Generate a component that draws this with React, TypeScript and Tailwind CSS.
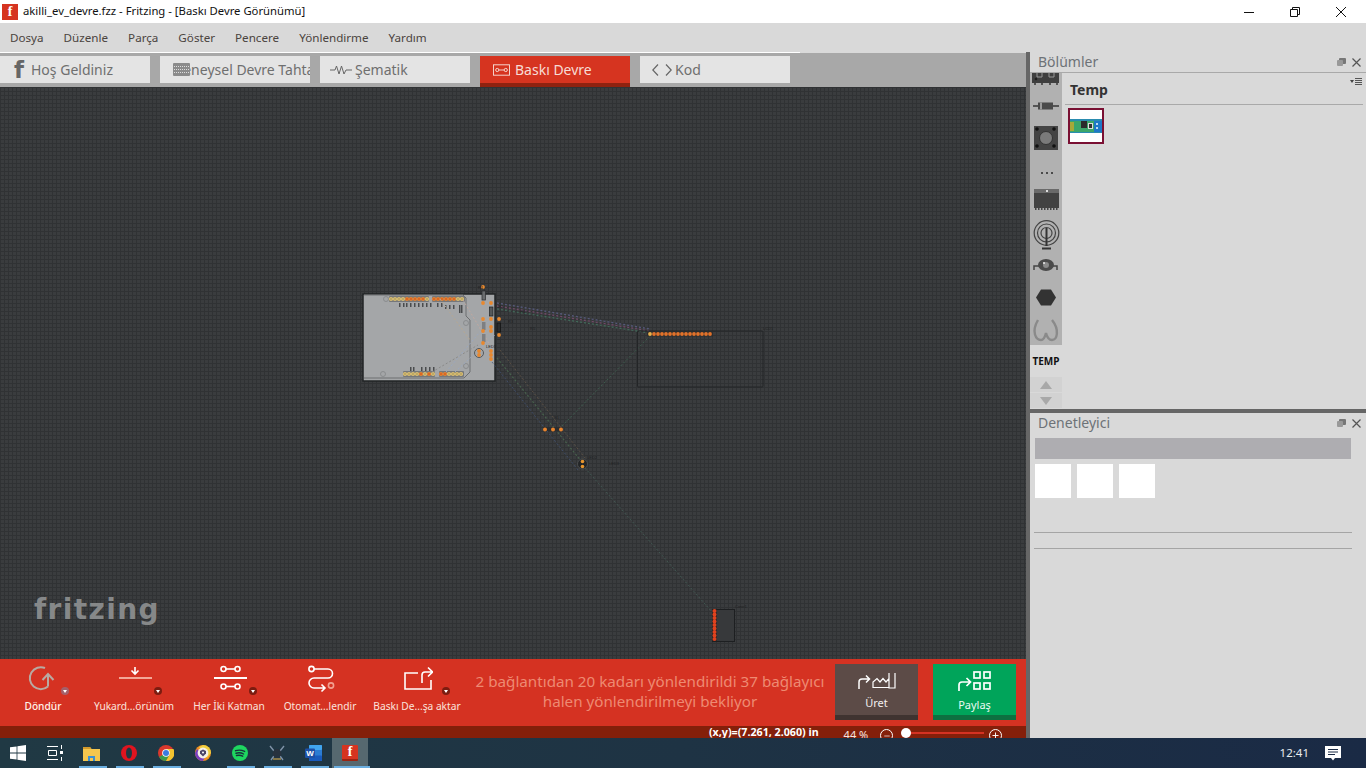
import { Minus, Plus } from 'lucide-react'

const menus = ['Dosya', 'Düzenle', 'Parça', 'Göster', 'Pencere', 'Yönlendirme', 'Yardım']

const range = (from: number, count: number, step: number) =>
  Array.from({ length: count }, (_, i) => from + i * step)

// tiny ratsnest wires, in page coordinates
const wires = [
  { d: 'M497 306 L650 331', c: '#7a4f70', w: 1.4, o: 0.85 },
  { d: 'M497 309 L650 333', c: '#44705e', w: 1.4, o: 0.85 },
  { d: 'M497 303 L650 329', c: '#5c5f85', w: 1.4, o: 0.85 },
  { d: 'M650 336 L561 427', c: '#3f6653', w: 1, o: 0.8 },
  { d: 'M497 358 L582 462', c: '#4b6a50', w: 1.2, o: 0.8 },
  { d: 'M492 362 L578 470', c: '#41547a', w: 1, o: 0.7 },
  { d: 'M500 350 L585 458', c: '#6a5a48', w: 1, o: 0.7 },
  { d: 'M585 468 L712 612', c: '#45625a', w: 1, o: 0.7 },
  { d: 'M440 299 L470 340', c: '#b8a890', w: 1, o: 1 },
  { d: 'M463 300 L490 345', c: '#c0a8a0', w: 1, o: 1 },
  { d: 'M432 372 L478 345', c: '#8a8a8a', w: 1, o: 1 },
  { d: 'M446 372 L490 320', c: '#9aa8c0', w: 1, o: 1 },
  { d: 'M455 372 L495 335', c: '#9aa8c0', w: 1, o: 1 },
]

function Pad({ x, y, hot }: { x: number; y: number; hot?: boolean }) {
  return (
    <g>
      <circle cx={x} cy={y} r={2.1} fill={hot ? '#e8822e' : '#dcc070'} />
      <circle cx={x} cy={y} r={0.8} fill={hot ? '#c8481c' : '#9c8c58'} />
    </g>
  )
}

function CircuitDrawing() {
  return (
    <svg className="block h-[572px] w-[1026px]" viewBox="0 87 1026 572" fill="none">
      {/* board */}
      <rect x="363" y="294" width="132" height="87" fill="#a4a6a8" stroke="#222426" strokeWidth="1.5" />
      <path d="M364 295 H463 L466 298 V316 L470 320 V372 L464 378 H364" stroke="#6c6e70" />
      {[[386, 299], [466, 323], [466, 366], [383, 374]].map(([x, y]) => (
        <circle key={x} cx={x} cy={y} r={2.5} stroke="#8a8c8e" />
      ))}
      <rect x="389" y="296" width="40" height="6" rx="1" fill="#75777a" />
      <rect x="432" y="296" width="33" height="6" rx="1" fill="#75777a" />
      <rect x="403" y="371" width="32" height="6" rx="1" fill="#75777a" />
      <rect x="439" y="371" width="25" height="6" rx="1" fill="#75777a" />
      {range(391, 10, 4).map((x, i) => <Pad key={x} x={x} y={299} hot={i > 3 && i < 9} />)}
      {range(434, 8, 4).map((x, i) => <Pad key={x} x={x} y={299} hot={i < 6} />)}
      {range(405, 8, 4).map((x, i) => <Pad key={x} x={x} y={374} hot={i === 4 || i === 6} />)}
      {range(441, 6, 4).map((x, i) => <Pad key={x} x={x} y={374} hot={i < 2} />)}
      {[399, 403, 406, 410, 414, 418, 422, 426, 430, 437, 441, 445, 449, 453, 459, 461].map((x, i) => (
        <rect key={i} x={x} y={i > 10 ? 305 : 303} width="1.5" height={i > 13 ? 8 : 4} fill="#4a4c4e" />
      ))}
      {[410, 413, 421, 425, 429, 433].map((x) => (
        <rect key={x} x={x} y="367" width="1.5" height="4" fill="#4a4c4e" />
      ))}

      {wires.map((w) => (
        <path key={w.d} d={w.d} stroke={w.c} strokeWidth={w.w} strokeOpacity={w.o} strokeDasharray="2 2" />
      ))}

      {/* resistors and leds next to the board */}
      <rect x="482" y="291" width="3.5" height="9" fill="#6a6c6e" stroke="#2a2c2e" strokeWidth=".7" />
      <rect x="489.5" y="307" width="3.5" height="9" fill="#55585a" stroke="#1f2123" strokeWidth=".7" />
      <rect x="497" y="323" width="3.5" height="9" fill="#2a2c2e" stroke="#111" strokeWidth=".7" />
      <rect x="482" y="322" width="3.5" height="8" fill="#7d7f82" />
      <rect x="482" y="334" width="3.5" height="8" fill="#7d7f82" />
      <rect x="489" y="324" width="5" height="10" rx="1" fill="#a4a6a8" />
      <rect x="489" y="349" width="5" height="12" rx="1" fill="#a4a6a8" />
      <circle cx="479" cy="353" r="4.5" fill="#a4a6a8" stroke="#55585a" />
      {([[483, 287], [483, 303], [491, 303], [491, 319], [499, 319], [499, 335], [483, 319], [483, 331], [483, 343], [491, 327], [491, 331], [491, 351], [491, 355], [491, 359], [479, 351], [479, 355]] as number[][]).map(([x, y]) => (
        <circle key={`${x}-${y}`} cx={x} cy={y} r={1.9} fill="#e8882e" />
      ))}

      {/* lcd */}
      <rect x="637.5" y="331" width="125.5" height="56" rx="1" stroke="#232527" strokeWidth="1" />
      <rect x="647" y="331.5" width="66" height="5" fill="#2b2d2f" />
      {range(650, 16, 4).map((x, i) => (
        <circle key={x} cx={x} cy={334} r={1.9} fill={i === 0 ? '#e8b04c' : '#e2722a'} />
      ))}

      {/* sensor */}
      <rect x="543" y="427" width="20" height="4" fill="#2b2d2f" />
      {[545, 553, 561].map((x) => <circle key={x} cx={x} cy={429.5} r={2} fill="#e8842e" />)}

      {/* led */}
      <circle cx="582.5" cy="464" r="5" fill="#232527" stroke="#4a4c4e" />
      <circle cx="582.5" cy="461.5" r="1.8" fill="#e8962e" />
      <circle cx="582.5" cy="466.5" r="1.8" fill="#e8962e" />

      {/* header */}
      <rect x="712.5" y="609.5" width="22" height="32" stroke="#1d1f21" strokeWidth="1" fill="#37393b" />
      <rect x="712" y="610" width="5" height="31" fill="#26282a" />
      {range(611, 9, 3.5).map((y) => <circle key={y} cx={714.5} cy={y} r={2} fill="#e0421e" />)}

      {/* part labels */}
      <g fill="#1f2123" fontFamily="Liberation Sans, sans-serif" fontSize="4">
        <text x="478" y="289">R1</text>
        <text x="498" y="308">R2</text>
        <text x="508" y="323">R3</text>
        <text x="520" y="313">R4</text>
        <text x="530" y="330">R5</text>
        <text x="486" y="348">LED1</text>
        <text x="763" y="330">LCD1</text>
        <text x="554" y="419">S1</text>
        <text x="587" y="459">LED2</text>
        <text x="609" y="465">LED3</text>
        <text x="735" y="608">Conn1</text>
      </g>
    </svg>
  )
}

function FritzingLogo() {
  return (
    <div className="absolute left-[34px] top-[503px] font-['DejaVu_Sans',sans-serif] text-[28px] font-bold leading-[40px] tracking-[1.4px] text-[#868889]">
      fritzing
    </div>
  )
}

function Tab({ label, icon, active, className }: { label: string; icon: React.ReactNode; active?: boolean; className: string }) {
  return (
    <div className="flex h-[31px] w-[150px] flex-col overflow-hidden">
      <div className={`relative flex h-[27px] items-center overflow-hidden whitespace-nowrap text-[14px] ${className} ${active ? 'bg-[#d63420] text-[#f6dcd6]' : 'bg-[#e4e4e4] text-[#6f6f6f]'}`}>
        {icon}
        <span>{label}</span>
      </div>
      {active && <div className="h-[4px] bg-[#8f2210]" />}
    </div>
  )
}

function ToolItem({ width, label, badge, badgeClass, icon, strong }: { width: string; label: string; badge?: string; badgeClass?: string; icon: React.ReactNode; strong?: boolean }) {
  return (
    <div className={`relative flex shrink-0 flex-col items-center pt-[5px] ${width}`}>
      <div className="flex h-[32px] items-center justify-center">{icon}</div>
      <div className={`mt-[3px] whitespace-nowrap text-[10.2px] leading-[14px] ${strong ? 'font-medium text-[#fff2ea]' : 'text-[#fbe3dd]'}`}>{label}</div>
      {badge && (
        <div className={`absolute top-[28px] flex h-[8px] w-[8px] items-center justify-center rounded-full ${badge} ${badgeClass ?? 'bg-[#7c1c10]'}`}>
          <div className="h-0 w-0 border-x-[2.5px] border-t-[3px] border-x-transparent border-t-white" />
        </div>
      )}
    </div>
  )
}

function Taskbar() {
  return (
    <div className="relative flex h-[30px] items-center bg-[linear-gradient(90deg,#203944,#1e3344_50%,#1a2a45)] text-white">
      <div className="flex w-[36px] justify-center">
        <svg width="16" height="16" viewBox="0 0 16 16" fill="#fff"><path d="M0 2.3 6.6 1.4V7.5H0ZM7.4 1.3 16 0V7.5H7.4ZM0 8.4H6.6V14.6L0 13.7ZM7.4 8.4H16V16L7.4 14.8Z" /></svg>
      </div>
      <div className="flex w-[36px] justify-center">
        <svg width="17" height="16" viewBox="0 0 17 16" fill="none" stroke="#fff"><path d="M1 1.5H12M1 14.5H12M2.5 5.5H10.5V10.5H2.5Z" /><path d="M15.5 0V4M15.5 12V16" /><rect x="14" y="6" width="3" height="3" fill="#fff" stroke="none" /></svg>
      </div>
      <div className="flex w-[38px] justify-center">
        <svg width="17" height="15" viewBox="0 0 17 15"><path d="M0 1H7L8.5 3H17V15H0Z" fill="#f4c64e" /><path d="M0 1H7L8.5 3H0Z" fill="#d39a2c" /><path d="M5 15V10H12V15H10V12H7V15Z" fill="#3b8fd2" /></svg>
      </div>
      <div className="flex w-[37px] justify-center">
        <svg width="16" height="16" viewBox="0 0 16 16"><circle cx="8" cy="8" r="8" fill="#e0141f" /><ellipse cx="8" cy="8" rx="3" ry="5.6" fill="#1f3844" /></svg>
      </div>
      <div className="flex w-[37px] justify-center">
        <svg width="16" height="16" viewBox="0 0 16 16"><circle cx="8" cy="8" r="8" fill="#d9382c" /><path d="M8 8 1 12A8 8 0 0 0 8 16L12 9Z" fill="#3c9a4a" /><path d="M8 4H15.4A8 8 0 0 1 8 16L12 9Z" fill="#f4c430" /><circle cx="8" cy="8" r="3.8" fill="#fff" /><circle cx="8" cy="8" r="3" fill="#3a7be0" /></svg>
      </div>
      <div className="flex w-[37px] justify-center">
        <svg width="16" height="16" viewBox="0 0 16 16"><circle cx="8" cy="8" r="8" fill="#f09020" /><path d="M8 0A8 8 0 0 1 16 8L12 13 4 2Z" fill="#f0d040" /><path d="M0 8A8 8 0 0 0 8 16L10 12 2 4Z" fill="#7a3fc0" /><circle cx="8" cy="8" r="5.4" fill="#f4f0e8" /><path d="M8 4.5 11 6V8.5L8 11.5 5 8.5V6Z" fill="#4a4468" /><circle cx="8" cy="7.5" r="1" fill="#fff" /></svg>
      </div>
      <div className="flex w-[37px] justify-center">
        <svg width="16" height="16" viewBox="0 0 16 16" fill="none"><circle cx="8" cy="8" r="8" fill="#1ed760" /><path d="M3.5 5.7C6.5 4.8 9.8 5 12.6 6.4M4 8.2C6.6 7.5 9.3 7.7 11.6 9M4.5 10.5C6.6 10 8.8 10.1 10.7 11.2" stroke="#18323c" strokeWidth="1.4" strokeLinecap="round" /></svg>
      </div>
      <div className="flex w-[37px] justify-center">
        <svg width="16" height="16" viewBox="0 0 16 16" fill="none"><path d="M1 1 5 6M15 1 11 6M2 15 5 11M14 15 11 11" stroke="#7f93a8" strokeWidth="1.4" /><circle cx="8" cy="8.5" r="4.4" fill="#27323e" /><path d="M4 14H12" stroke="#c9a24c" strokeWidth="1.2" /></svg>
      </div>
      <div className="flex w-[37px] justify-center">
        <svg width="17" height="16" viewBox="0 0 17 16"><rect x="4" y="0" width="13" height="16" rx="1" fill="#2b7cd3" /><rect x="4" y="0" width="13" height="5" rx="1" fill="#41a5ee" /><rect x="4" y="10.5" width="13" height="5.5" rx="1" fill="#185abd" /><rect x="0" y="3.5" width="10" height="9.5" rx="1" fill="#1d50a6" /><text x="5" y="11.2" textAnchor="middle" fontSize="8" fontWeight="700" fontFamily="Liberation Sans, sans-serif" fill="#fff">W</text></svg>
      </div>
      <div className="flex h-[30px] w-[36px] items-center justify-center bg-[#56686f]">
        <div className="flex h-[16px] w-[16px] items-center justify-center rounded-[1px] border-b-2 border-b-[#9a2413] bg-[#d63420] font-['Liberation_Serif',serif] text-[14px] font-bold leading-none text-white">f</div>
      </div>

      <div className="ml-auto mr-[25px] flex items-center gap-[16px]">
        <span className="text-[11.5px] text-[#e8ecf0]">12:41</span>
        <svg width="16" height="16" viewBox="0 0 16 16"><path d="M0 1H16V13H10L8 15.5 6 13H0Z" fill="#fff" /><path d="M3 4.5H13M3 7H13M3 9.5H10" stroke="#1a2a45" /></svg>
      </div>

      {/* running-app underlines */}
      <div className="absolute bottom-0 left-[79px] h-[2px] w-[28px] bg-[#6aaee0]" />
      <div className="absolute bottom-0 left-[116px] h-[2px] w-[28px] bg-[#6aaee0]" />
      <div className="absolute bottom-0 left-[153px] h-[2px] w-[28px] bg-[#6aaee0]" />
      <div className="absolute bottom-0 left-[227px] h-[2px] w-[28px] bg-[#6aaee0]" />
      <div className="absolute bottom-0 left-[264px] h-[2px] w-[28px] bg-[#6aaee0]" />
      <div className="absolute bottom-0 left-[301px] h-[2px] w-[28px] bg-[#6aaee0]" />
      <div className="absolute bottom-0 left-[334px] h-[2px] w-[36px] bg-[#6aaee0]" />
    </div>
  )
}

function BinIcons() {
  return (
    <svg className="block h-[273px] w-[32px]" viewBox="1030 73 32 273" fill="none">
      {/* ic clipped at the top */}
      <rect x="1032" y="70" width="27" height="13" fill="#3f3f3f" />
      <path d="M1037 73V77H1042V73M1049 73V77H1054V73" stroke="#999" />
      <circle cx="1036" cy="79" r="1.3" fill="#1f1f1f" />
      {[1034, 1041, 1049, 1056].map((x) => <rect key={x} x={x} y="83" width="2" height="2" fill="#555" />)}
      {/* diode */}
      <path d="M1033 106H1059" stroke="#555" strokeWidth="2" />
      <rect x="1038" y="102.5" width="15" height="7" fill="#4a4a4a" />
      <rect x="1040" y="102.5" width="2" height="7" fill="#9a9a9a" />
      {/* push button */}
      <rect x="1034" y="126" width="24" height="24" fill="#444" />
      <circle cx="1046" cy="138" r="6.5" fill="#7a7a7a" stroke="#333" />
      {[[1037, 129], [1054, 129], [1037, 146], [1054, 146]].map(([x, y]) => <circle key={`${x}${y}`} cx={x} cy={y} r="1.8" fill="#111" />)}
      {/* dots */}
      {[1041, 1046, 1051].map((x) => <rect key={x} x={x} y="172" width="2" height="2" fill="#4a4a4a" />)}
      {/* chip */}
      <rect x="1034" y="189" width="25" height="19" fill="#424242" />
      <rect x="1034" y="189" width="25" height="4" fill="#6a6a6a" />
      <rect x="1046" y="190" width="2" height="2" fill="#ddd" />
      {range(1035, 8, 3).map((x) => <rect key={x} x={x} y="208" width="1.5" height="2" fill="#444" />)}
      {/* antenna */}
      <circle cx="1046.5" cy="233" r="12.3" stroke="#444" strokeWidth="1.2" />
      <circle cx="1046.5" cy="233" r="9" stroke="#444" strokeWidth="1.2" />
      <circle cx="1046.5" cy="233" r="5.5" stroke="#444" strokeWidth="1.2" />
      <path d="M1046.5 228V246" stroke="#333" strokeWidth="2" />
      <path d="M1042 248.5H1051" stroke="#333" strokeWidth="2" />
      {/* motor */}
      <path d="M1034 270V266H1040M1053 266H1057V270" stroke="#444" strokeWidth="1.5" />
      <ellipse cx="1046" cy="265" rx="8" ry="6" fill="#4a4a4a" />
      <circle cx="1046" cy="265" r="3" fill="#8a8a8a" />
      <circle cx="1044" cy="263" r="1" fill="#eee" />
      {/* hex */}
      <path d="M1041 289.5H1051L1056 297.5 1051 305.5H1041L1036 297.5Z" fill="#333" />
      {/* wire loop */}
      <path d="M1038 320C1031 332 1036 340 1041 340 1044 340 1045 337 1046 333 1047 337 1049 340 1052 340 1057 340 1060 330 1052 320" stroke="#8a8a8a" strokeWidth="2.4" />
    </svg>
  )
}

function PanelHeader({ title }: { title: string }) {
  return (
    <div className="flex h-[20px] items-center justify-between pl-[8px] pr-[5px]">
      <span className="text-[14px] leading-[20px] text-[#6d7277]">{title}</span>
      <div className="flex items-center gap-[6px]">
        <svg width="9" height="8" viewBox="0 0 9 8"><rect x="2" y="0" width="7" height="6" rx="1" fill="#777" /><rect x="0" y="2" width="6" height="6" rx="1" fill="#999" /></svg>
        <svg width="9" height="9" viewBox="0 0 9 9" stroke="#555" strokeWidth="1.2"><path d="M.5.5 8.5 8.5M8.5.5.5 8.5" /></svg>
      </div>
    </div>
  )
}

export default function App() {
  return (
    <div className="flex h-[768px] w-[1366px] flex-col overflow-hidden bg-[#d9d9d9] font-['Noto_Sans',sans-serif]">
      {/* title bar */}
      <div className="flex h-[23px] items-center bg-white">
        <div className="ml-[2px] flex h-[16px] w-[16px] items-center justify-center bg-[#d63420] font-['Liberation_Serif',serif] text-[14px] font-bold leading-none text-white">f</div>
        <span className="ml-[5px] text-[11.3px] text-[#111]">akilli_ev_devre.fzz - Fritzing - [Baskı Devre Görünümü]</span>
        <div className="ml-auto mr-[2px] flex">
          <div className="flex w-[46px] justify-center"><svg width="10" height="10" viewBox="0 0 10 10" stroke="#111"><path d="M0 5.5H10" /></svg></div>
          <div className="flex w-[46px] justify-center"><svg width="10" height="10" viewBox="0 0 10 10" fill="none" stroke="#111"><path d="M.5 2.5H7.5V9.5H.5ZM2.5 2.5V.5H9.5V7.5H7.5" /></svg></div>
          <div className="flex w-[46px] justify-center"><svg width="10" height="10" viewBox="0 0 10 10" stroke="#111"><path d="M0 0 10 10M10 0 0 10" /></svg></div>
        </div>
      </div>

      {/* menu bar */}
      <div className="flex h-[29px] items-center gap-[20px] px-[10px] text-[11.65px] text-[#4b4440]">
        {menus.map((m) => <span key={m}>{m}</span>)}
      </div>

      <div className="flex min-h-0 flex-1">
        {/* left work area */}
        <div className="flex w-[1026px] flex-col">
          <div className="h-[1px] w-[800px] bg-white" />
          <div className="flex h-[34px] gap-[10px] bg-[#a8a8a8] pt-[3px]">
            <Tab
              className="pl-[14px]"
              label="Hoş Geldiniz"
              icon={<span className="w-[17px] font-['DejaVu_Sans',sans-serif] text-[23px] font-bold leading-[26px] text-[#666]">f</span>}
            />
            <div className="flex h-[31px] w-[150px] flex-col overflow-hidden">
              <div className="relative flex h-[27px] items-center overflow-hidden whitespace-nowrap bg-[#e4e4e4] pl-[13px] text-[14px] text-[#6f6f6f]">
                <span>Deneysel Devre Tahtası</span>
                <div className="absolute left-[13px] top-[7px] flex h-[13px] w-[17px] flex-col justify-center gap-[2px] rounded-[1px] bg-[#8b8b8b] px-[1px]">
                  <div className="h-[1px] border-t border-dotted border-[#ddd]" />
                  <div className="h-[1px] border-t border-dotted border-[#ddd]" />
                  <div className="h-[1px] border-t border-dotted border-[#ddd]" />
                </div>
              </div>
            </div>
            <Tab
              className="gap-[3px] pl-[10px]"
              label="Şematik"
              icon={<svg width="22" height="10" viewBox="0 0 22 10" fill="none" stroke="#666" strokeWidth="1"><path d="M0 5H5L6.5 1 9 9 11.5 1 14 9 16 5H22" /></svg>}
            />
            <Tab
              active
              className="gap-[5px] pl-[13px]"
              label="Baskı Devre"
              icon={<svg width="17" height="12" viewBox="0 0 18 12" fill="none" stroke="#f6dcd6" strokeWidth="1"><rect x=".5" y=".5" width="17" height="11" /><circle cx="4.5" cy="6" r="1.7" /><circle cx="13.5" cy="6" r="1.7" /><path d="M6 6H12" /></svg>}
            />
            <Tab
              className="gap-[3px] pl-[12px]"
              label="Kod"
              icon={<svg width="20" height="12" viewBox="0 0 20 12" fill="none" stroke="#666" strokeWidth="1.2"><path d="M6 .5.8 6 6 11.5M14 .5 19.2 6 14 11.5" /></svg>}
            />
          </div>

          {/* canvas */}
          <div className="relative h-[572px] overflow-hidden bg-[#3a3c3e] bg-[linear-gradient(#303234_1px,transparent_1px),linear-gradient(90deg,#303234_1px,transparent_1px)] bg-size-[4px_4px]">
            <CircuitDrawing />
            <FritzingLogo />
          </div>

          {/* bottom toolbar */}
          <div className="flex h-[67px] bg-[#d53222]">
            <ToolItem
              strong
              width="w-[86px]"
              label="Döndür"
              badge="left-[61px]"
              badgeClass="bg-[#a4606a]"
              icon={<svg width="32" height="30" viewBox="27 665 32 30" fill="none" stroke="#b9a9a2" strokeWidth="2"><path d="M48 675V686.5M42.5 680 48 674 53.5 680" /><path d="M48 686.5A11 11 0 1 1 45 668" /></svg>}
            />
            <ToolItem
              width="w-[96px]"
              label="Yukard...örünüm"
              badge="left-[68px]"
              icon={<svg width="36" height="30" viewBox="116 665 36 30" fill="none"><path d="M135 667V673M131.5 670.5 135 674 138.5 670.5" stroke="#fff" strokeWidth="1.6" /><path d="M119 678H152" stroke="#f3a797" strokeWidth="2" /></svg>}
            />
            <ToolItem
              width="w-[94px]"
              label="Her İki Katman"
              badge="left-[67px]"
              icon={<svg width="36" height="30" viewBox="211 665 36 30" fill="none" stroke="#fff" strokeWidth="1.6"><circle cx="223.5" cy="669" r="2.5" /><circle cx="237.5" cy="669" r="2.5" /><path d="M226 669H235" /><path d="M214 678H247" strokeWidth="2" /><circle cx="223.5" cy="686.5" r="2.5" /><circle cx="237.5" cy="686.5" r="2.5" /><path d="M226 686.5H235" /></svg>}
            />
            <ToolItem
              width="w-[88px]"
              label="Otomat...lendir"
              icon={<svg width="30" height="30" viewBox="305 665 30 30" fill="none" stroke="#fff" strokeWidth="1.6"><circle cx="311.5" cy="669" r="2.6" /><path d="M314 669H328A4.5 4.5 0 0 1 328 678H314A4.5 4.5 0 0 0 314 688H325M321.5 684.5 325 688 321.5 691.5" /><circle cx="331" cy="685.5" r="2.6" stroke="#f2a090" /></svg>}
            />
            <ToolItem
              width="w-[106px]"
              label="Baskı De...şa aktar"
              badge="left-[78px]"
              icon={<svg width="32" height="30" viewBox="401 665 32 30" fill="none" stroke="#fff" strokeWidth="1.6"><path d="M418 673H405V689H431V680" /><path d="M422 683V675A3 3 0 0 1 425 672H432M428 667.5 432.5 672 428 676.5" /></svg>}
            />
            <div className="flex w-[360px] shrink-0 items-center justify-center pb-[3px] text-center text-[15.2px] leading-[20px] text-[#ee8a72]">
              <span>2 bağlantıdan 20 kadarı yönlendirildi 37 bağlayıcı<br />halen yönlendirilmeyi bekliyor</span>
            </div>
            <div className="ml-[5px] mt-[5px] flex h-[56px] w-[83px] flex-col overflow-hidden bg-[#5c4b47] text-[#f2eeee]">
              <div className="flex flex-1 flex-col items-center pt-[8px]">
                <svg width="38" height="18" viewBox="0 0 38 18" fill="none" stroke="#fff" strokeWidth="1.5"><path d="M1 17V10A3 3 0 0 1 4 7H11M8 3.5 11.5 7 8 10.5" /><path d="M15 15.5V10L19 6.5 22 10 25 6.5 28 10 31 6.5V15.5ZM31 1V16H37V1" strokeWidth="1.2" /></svg>
                <span className="mt-[6px] text-[11px] leading-[14px]">Üret</span>
              </div>
              <div className="h-[5px] bg-[#3f3330]" />
            </div>
            <div className="ml-[15px] mt-[5px] flex h-[56px] w-[83px] flex-col overflow-hidden bg-[#00a45a] text-[#eafaf2]">
              <div className="flex flex-1 flex-col items-center pt-[7px]">
                <svg width="34" height="21" viewBox="0 0 34 21" fill="none" stroke="#fff" strokeWidth="1.7"><path d="M1 20V14A3 3 0 0 1 4 11H12M8.5 7 12.5 11 8.5 15" /><rect x="16" y="1" width="6" height="6" /><rect x="26" y="1" width="6" height="6" /><rect x="16" y="12" width="6" height="6" /><rect x="26" y="12" width="6" height="6" /></svg>
                <span className="mt-[6px] text-[11px] leading-[14px]">Paylaş</span>
              </div>
              <div className="h-[5px] bg-[#0d7040]" />
            </div>
          </div>

          {/* status bar */}
          <div className="flex h-[12px] items-start overflow-hidden bg-[#841f0a] text-white">
            <span className="ml-[709px] text-[10.7px] font-bold leading-[12px]">(x,y)=(7.261, 2.060) in</span>
            <span className="ml-[25px] mt-[2px] text-[11px] leading-[14px] text-[#f4e4e0]">44 %</span>
            <div className="ml-[12px] mt-[3px] flex h-[13px] w-[13px] shrink-0 items-center justify-center rounded-full border border-white"><Minus size={8} strokeWidth={2} /></div>
            <div className="relative ml-[8px] mt-[6px] h-[2px] w-[83px] shrink-0 bg-[#d53222]">
              <div className="absolute -top-[4px] left-0 h-[10px] w-[10px] rounded-full bg-white" />
            </div>
            <div className="ml-[5px] mt-[3px] flex h-[13px] w-[13px] shrink-0 items-center justify-center rounded-full border border-white"><Plus size={9} strokeWidth={2.5} /></div>
          </div>
        </div>

        {/* splitter */}
        <div className="w-[4px] bg-[#666]" />

        {/* right docks */}
        <div className="flex w-[336px] flex-col">
          <PanelHeader title="Bölümler" />
          <div className="flex h-[337px] border-t border-[#a9a9a9]">
            <div className="flex w-[32px] flex-col">
              <div className="h-[272px] overflow-hidden bg-[#b1b1b1]"><BinIcons /></div>
              <div className="flex h-[32px] items-center justify-center text-[10px] font-bold text-[#111]">TEMP</div>
              <div className="flex h-[15px] items-center justify-center bg-[#d2d2d2]"><div className="h-0 w-0 border-x-[6px] border-b-[8px] border-x-transparent border-b-[#a8a8a8]" /></div>
              <div className="mt-[1px] flex h-[15px] items-center justify-center bg-[#d2d2d2]"><div className="h-0 w-0 border-x-[6px] border-t-[8px] border-x-transparent border-t-[#a8a8a8]" /></div>
            </div>
            <div className="flex-1 pl-[3px] pr-[3px]">
              <div className="flex h-[32px] items-center justify-between border-b border-[#a9a9a9] pl-[5px] pr-[1px] pt-[2px]">
                <span className="text-[14px] font-bold text-[#333]">Temp</span>
                <div className="mb-[16px] flex items-center gap-[1px]">
                  <div className="h-0 w-0 border-x-[2.5px] border-t-[3px] border-x-transparent border-t-[#444]" />
                  <div className="flex w-[7px] flex-col gap-[1px]">
                    <div className="h-[1px] bg-[#555]" />
                    <div className="h-[1px] bg-[#555]" />
                    <div className="h-[1px] bg-[#555]" />
                    <div className="h-[1px] bg-[#555]" />
                  </div>
                </div>
              </div>
              <div className="ml-[3px] mt-[3px] flex h-[36px] w-[36px] items-center justify-center border-2 border-[#7a1033] bg-white">
                <svg width="32" height="14" viewBox="0 0 32 14">
                  <rect width="32" height="14" fill="#2a8cb0" />
                  <rect x="0" y="2" width="25" height="11" fill="#3ca66a" />
                  <rect x="0" y="3" width="4" height="9" fill="#a8a838" />
                  <rect x="11" y="2" width="6" height="7" fill="#2b2b2b" />
                  <rect x="18" y="4" width="5" height="6" fill="#dcdcdc" />
                  <rect x="19" y="5" width="3" height="4" fill="#333" />
                  <rect x="24" y="2" width="8" height="11" fill="#1e78c8" />
                  <rect x="26" y="4" width="2" height="2" fill="#b8d8f0" />
                  <rect x="26" y="8" width="2" height="2" fill="#b8d8f0" />
                </svg>
              </div>
            </div>
          </div>

          <div className="h-[4px] bg-[#666]" />

          <PanelHeader title="Denetleyici" />
          <div className="px-[5px] pt-[5px]">
            <div className="h-[21px] w-[316px] bg-[#aeadb1]" />
            <div className="mt-[5px] flex gap-[6px]">
              <div className="h-[34px] w-[36px] bg-white" />
              <div className="h-[34px] w-[36px] bg-white" />
              <div className="h-[34px] w-[36px] bg-white" />
            </div>
            <div className="-ml-[1px] mt-[34px] h-[1px] w-[318px] bg-[#a5a5a5]" />
            <div className="-ml-[1px] mt-[15px] h-[1px] w-[318px] bg-[#a5a5a5]" />
          </div>
        </div>
      </div>

      <Taskbar />
    </div>
  )
}
